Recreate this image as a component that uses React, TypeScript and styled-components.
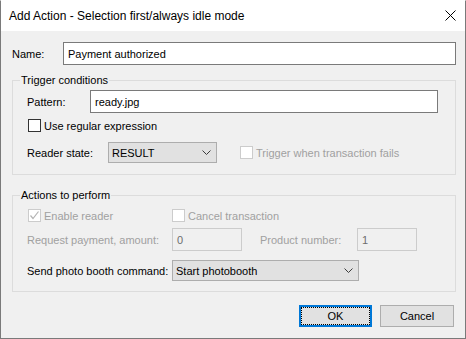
import styled, { createGlobalStyle } from "styled-components";

const GlobalStyle = createGlobalStyle`
  html, body {
    margin: 0;
    padding: 0;
    background: #f0f0f0;
  }
  body {
    font-family: "Liberation Sans", Arial, sans-serif;
    font-size: 11px;
    color: #000;
  }
  * {
    box-sizing: border-box;
  }
`;

const Window = styled.div`
  width: 466px;
  height: 339px;
  display: flex;
  flex-direction: column;
  background: #f0f0f0;
  border: 1px solid #7a7a7a;
  border-top-color: #ffffff;
`;

const TitleBar = styled.div`
  flex: none;
  height: 30px;
  display: flex;
  align-items: center;
  justify-content: space-between;
  padding: 0 9px 0 8px;
  background: #ffffff;
  font-size: 12px;
  color: #000;
`;

const CloseIcon = styled.svg`
  display: block;
  margin-top: -1px;
`;

const Body = styled.div`
  flex: 1;
  display: flex;
  flex-direction: column;
  padding: 11px 9px 0 11px;
`;

const Row = styled.div<{ $top?: number; $h: number }>`
  display: flex;
  align-items: center;
  height: ${(p) => p.$h}px;
  margin-top: ${(p) => p.$top ?? 0}px;
`;

const Label = styled.span<{ $w?: number; $off?: number; $disabled?: boolean }>`
  flex: none;
  width: ${(p) => (p.$w ? `${p.$w}px` : "auto")};
  margin-left: ${(p) => p.$off ?? 0}px;
  color: ${(p) => (p.$disabled ? "#a0a0a0" : "#000")};
  white-space: nowrap;
`;

const TextBox = styled.div<{ $w?: number; $disabled?: boolean }>`
  flex: ${(p) => (p.$w ? "none" : "1")};
  width: ${(p) => (p.$w ? `${p.$w}px` : "auto")};
  height: 23px;
  display: flex;
  align-items: center;
  padding: 0 4px;
  border: 1px solid ${(p) => (p.$disabled ? "#cccccc" : "#7a7a7a")};
  background: ${(p) => (p.$disabled ? "#f0f0f0" : "#ffffff")};
  color: ${(p) => (p.$disabled ? "#6d6d6d" : "#000")};
  white-space: nowrap;
`;

const Combo = styled.div<{ $w: number }>`
  flex: none;
  width: ${(p) => p.$w}px;
  height: 21px;
  display: flex;
  align-items: center;
  justify-content: space-between;
  padding: 0 5px 0 3px;
  border: 1px solid #adadad;
  background: #e1e1e1;
  color: #000;
  white-space: nowrap;
`;

const Chevron = styled.svg`
  display: block;
`;

const Group = styled.div<{ $top: number; $pad: string }>`
  position: relative;
  margin-top: ${(p) => p.$top}px;
  padding: ${(p) => p.$pad};
  border: 1px solid #dcdcdc;
`;

const Legend = styled.span`
  position: absolute;
  left: 7px;
  top: -7px;
  padding: 0 1px;
  line-height: 13px;
  background: #f0f0f0;
  color: #000;
  white-space: nowrap;
`;

const CheckItem = styled.label<{ $w?: number; $off?: number; $disabled?: boolean }>`
  flex: none;
  display: flex;
  align-items: center;
  gap: 3px;
  width: ${(p) => (p.$w ? `${p.$w}px` : "auto")};
  margin-left: ${(p) => p.$off ?? 0}px;
  color: ${(p) => (p.$disabled ? "#a0a0a0" : "#000")};
  white-space: nowrap;
`;

const Box = styled.span<{ $disabled?: boolean }>`
  flex: none;
  width: 13px;
  height: 13px;
  display: flex;
  align-items: center;
  justify-content: center;
  border: 1px solid ${(p) => (p.$disabled ? "#cccccc" : "#333333")};
  background: #ffffff;
`;

const ButtonRow = styled.div`
  display: flex;
  justify-content: flex-end;
  gap: 8px;
  margin-top: 13px;
  padding-right: 2px;
`;

const Button = styled.div<{ $w: number; $default?: boolean }>`
  position: relative;
  width: ${(p) => p.$w}px;
  height: 22px;
  display: flex;
  align-items: center;
  justify-content: center;
  background: #e1e1e1;
  border: ${(p) => (p.$default ? "2px solid #0078d7" : "1px solid #adadad")};
  color: #000;

  ${(p) =>
    p.$default &&
    `
    &::after {
      content: "";
      position: absolute;
      inset: 0;
      border: 1px dotted #000;
    }
  `}
`;

function Check({ checked, disabled }: { checked?: boolean; disabled?: boolean }) {
  return (
    <Box $disabled={disabled}>
      {checked && (
        <svg width="11" height="11" viewBox="0 0 11 11">
          <polyline
            points="1.5,5.5 4,8.5 9.5,1.5"
            fill="none"
            stroke={disabled ? "#b4b4b4" : "#333"}
            strokeWidth="1.2"
          />
        </svg>
      )}
    </Box>
  );
}

function DropArrow() {
  return (
    <Chevron width="9" height="5" viewBox="0 0 9 5">
      <polyline points="0.5,0.5 4.5,4.5 8.5,0.5" fill="none" stroke="#3c3c3c" strokeWidth="1" />
    </Chevron>
  );
}

export default function App() {
  return (
    <>
      <GlobalStyle />
      <Window>
        <TitleBar>
          <span>Add Action - Selection first/always idle mode</span>
          <CloseIcon width="11" height="11" viewBox="0 0 11 11">
            <path d="M0.5 0.5 L10.5 10.5 M10.5 0.5 L0.5 10.5" stroke="#000" strokeWidth="1" />
          </CloseIcon>
        </TitleBar>
        <Body>
          <Row $h={23}>
            <Label $w={51}>Name:</Label>
            <TextBox>Payment authorized</TextBox>
          </Row>

          <Group $top={15} $pad="9px 0 11px 14px">
            <Legend>Trigger conditions</Legend>
            <Row $h={23}>
              <Label $w={63}>Pattern:</Label>
              <TextBox $w={348}>ready.jpg</TextBox>
            </Row>
            <Row $top={6} $h={13}>
              <CheckItem $off={1}>
                <Check />
                Use regular expression
              </CheckItem>
            </Row>
            <Row $top={10} $h={21}>
              <Label $w={81}>Reader state:</Label>
              <Combo $w={109}>
                <span>RESULT</span>
                <DropArrow />
              </Combo>
              <CheckItem $off={23} $disabled>
                <Check disabled />
                Trigger when transaction fails
              </CheckItem>
            </Row>
          </Group>

          <Group $top={20} $pad="13px 0 10px 14px">
            <Legend>Actions to perform</Legend>
            <Row $h={13}>
              <CheckItem $off={1} $w={144} $disabled>
                <Check checked disabled />
                Enable reader
              </CheckItem>
              <CheckItem $disabled>
                <Check disabled />
                Cancel transaction
              </CheckItem>
            </Row>
            <Row $top={6} $h={23}>
              <Label $w={145} $disabled>
                Request payment, amount:
              </Label>
              <TextBox $w={70} $disabled>
                0
              </TextBox>
              <Label $w={97} $off={18} $disabled>
                Product number:
              </Label>
              <TextBox $w={60} $disabled>
                1
              </TextBox>
            </Row>
            <Row $top={9} $h={21}>
              <Label $w={145}>Send photo booth command:</Label>
              <Combo $w={187}>
                <span>Start photobooth</span>
                <DropArrow />
              </Combo>
            </Row>
          </Group>

          <ButtonRow>
            <Button $w={73} $default>
              OK
            </Button>
            <Button $w={74}>Cancel</Button>
          </ButtonRow>
        </Body>
      </Window>
    </>
  );
}
